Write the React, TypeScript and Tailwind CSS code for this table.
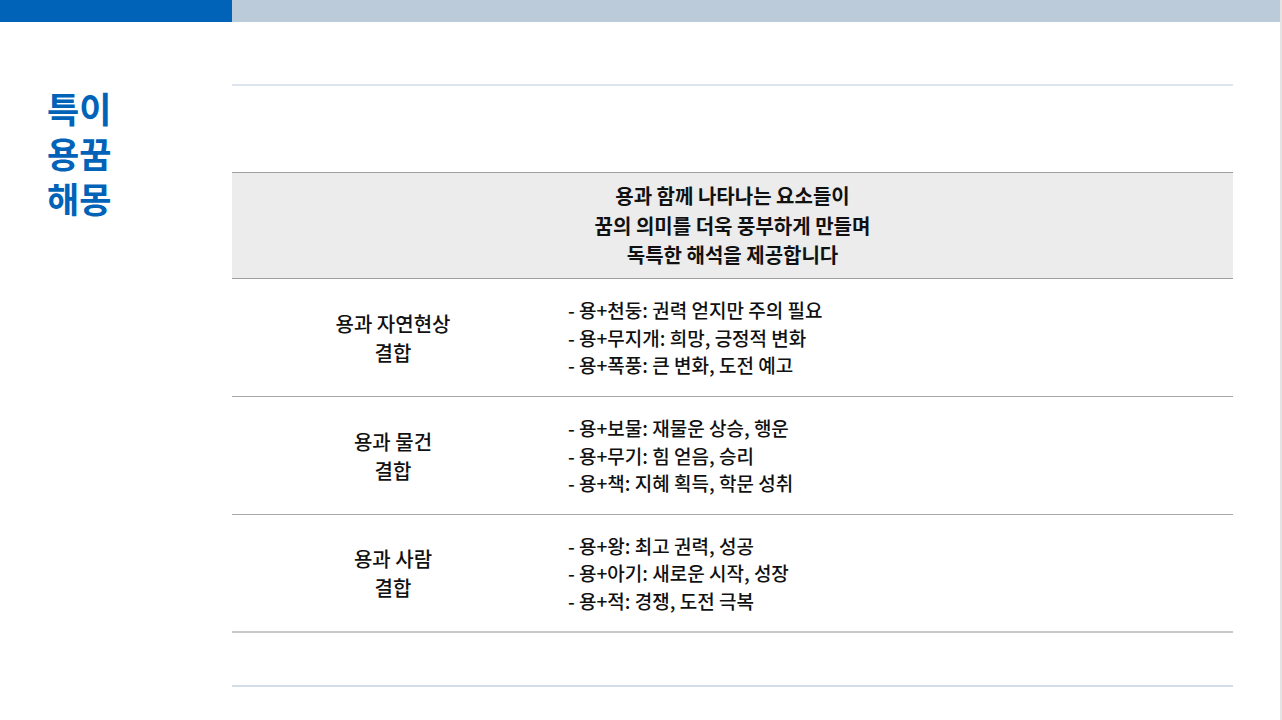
const rows = [
  {
    label: ["용과 자연현상", "결합"],
    items: ["- 용+천둥: 권력 얻지만 주의 필요", "- 용+무지개: 희망, 긍정적 변화", "- 용+폭풍: 큰 변화, 도전 예고"],
  },
  {
    label: ["용과 물건", "결합"],
    items: ["- 용+보물: 재물운 상승, 행운", "- 용+무기: 힘 얻음, 승리", "- 용+책: 지혜 획득, 학문 성취"],
  },
  {
    label: ["용과 사람", "결합"],
    items: ["- 용+왕: 최고 권력, 성공", "- 용+아기: 새로운 시작, 성장", "- 용+적: 경쟁, 도전 극복"],
  },
];

export default function App() {
  return (
    <div
      className="w-[1282px] h-[720px] bg-white flex overflow-hidden"
      style={{ fontFamily: '"Noto Sans CJK KR", "Noto Sans", sans-serif' }}
    >
      <div className="w-[1280px] h-full flex flex-col">
        {/* top bar */}
        <div className="flex h-[22px]">
          <div className="w-[232px] bg-[#0063b8]" />
          <div className="flex-1 bg-[#bbcbd9]" />
        </div>

        <div className="flex flex-1">
          <div className="w-[232px] pl-[47px] pt-[63px]">
            <h1 className="text-[35px] leading-[45px] font-bold text-[#0063b8]">
              특이
              <br />
              용꿈
              <br />
              해몽
            </h1>
          </div>

          <div className="w-[1001px] flex flex-col">
            <div className="mt-[62px] h-[2px] bg-[#dfe5ee]" />

            <div className="mt-[86px] border-t border-b border-[#9f9f9f] bg-[#ececec] h-[107px] flex flex-col items-center justify-center text-[20px] leading-[29.5px] font-semibold text-[#111]">
              <p>용과 함께 나타나는 요소들이</p>
              <p>꿈의 의미를 더욱 풍부하게 만들며</p>
              <p>독특한 해석을 제공합니다</p>
            </div>

            {rows.map((r, i) => (
              <div
                key={i}
                className={`flex h-[118px] items-center ${i === rows.length - 1 ? "border-b-2 border-[#c8c8c8]" : "border-b border-[#a8a8a8]"}`}
              >
                <div className="w-[322px] text-center text-[20px] leading-[29px] font-medium text-[#111]">
                  {r.label.map((l) => (
                    <p key={l}>{l}</p>
                  ))}
                </div>
                <div className="pl-[14px] text-[19px] leading-[27.5px] font-medium text-[#111]">
                  {r.items.map((t) => (
                    <p key={t}>{t}</p>
                  ))}
                </div>
              </div>
            ))}

            <div className="mt-[52px] h-[2px] bg-[#d3dde9]" />
          </div>
        </div>
      </div>
      <div className="w-[2px] h-full bg-[#e4e4e4]" />
    </div>
  );
}
